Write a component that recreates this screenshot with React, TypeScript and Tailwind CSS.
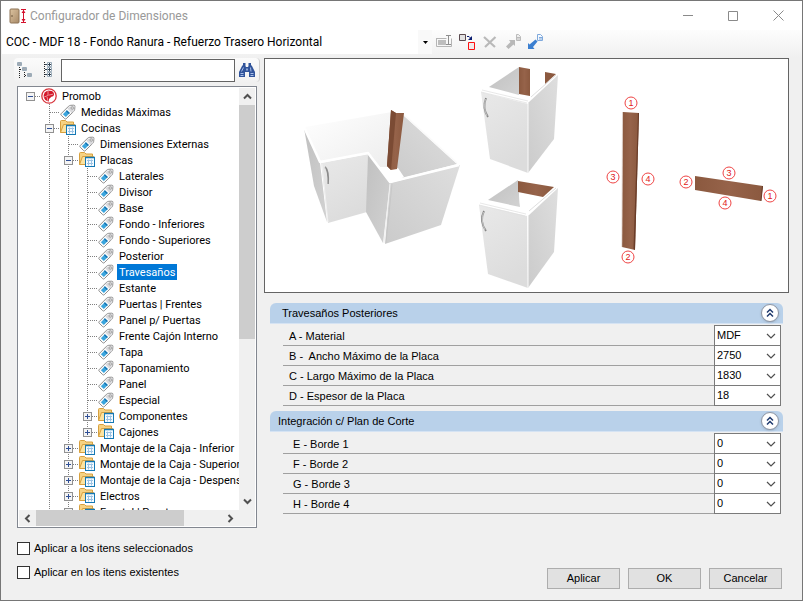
import type { ReactNode } from "react";
import { clsx } from "clsx";

type Guide = "none" | "line";

interface TreeNode {
  label: string;
  depth: number;
  kind: "root" | "tag" | "folder";
  open?: boolean;
  last?: boolean;
  selected?: boolean;
}

const nodes: TreeNode[] = [
  { label: "Promob", depth: 0, kind: "root", open: true },
  { label: "Medidas Máximas", depth: 1, kind: "tag" },
  { label: "Cocinas", depth: 1, kind: "folder", open: true },
  { label: "Dimensiones Externas", depth: 2, kind: "tag" },
  { label: "Placas", depth: 2, kind: "folder", open: true },
  { label: "Laterales", depth: 3, kind: "tag" },
  { label: "Divisor", depth: 3, kind: "tag" },
  { label: "Base", depth: 3, kind: "tag" },
  { label: "Fondo - Inferiores", depth: 3, kind: "tag" },
  { label: "Fondo - Superiores", depth: 3, kind: "tag" },
  { label: "Posterior", depth: 3, kind: "tag" },
  { label: "Travesaños", depth: 3, kind: "tag", selected: true },
  { label: "Estante", depth: 3, kind: "tag" },
  { label: "Puertas | Frentes", depth: 3, kind: "tag" },
  { label: "Panel p/ Puertas", depth: 3, kind: "tag" },
  { label: "Frente Cajón Interno", depth: 3, kind: "tag" },
  { label: "Tapa", depth: 3, kind: "tag" },
  { label: "Taponamiento", depth: 3, kind: "tag" },
  { label: "Panel", depth: 3, kind: "tag" },
  { label: "Especial", depth: 3, kind: "tag" },
  { label: "Componentes", depth: 3, kind: "folder" },
  { label: "Cajones", depth: 3, kind: "folder", last: true },
  { label: "Montaje de la Caja - Inferior", depth: 2, kind: "folder" },
  { label: "Montaje de la Caja - Superior", depth: 2, kind: "folder" },
  { label: "Montaje de la Caja - Despensa", depth: 2, kind: "folder" },
  { label: "Electros", depth: 2, kind: "folder" },
  { label: "Frontal | Puertas", depth: 2, kind: "folder" },
];

const sections = [
  {
    title: "Travesaños Posteriores",
    titleClass: "pl-3",
    labelClass: "pl-1.5",
    fields: [
      { id: "a", label: "A - Material", value: "MDF" },
      { id: "b", label: "B -  Ancho Máximo de la Placa", value: "2750" },
      { id: "c", label: "C - Largo Máximo de la Placa", value: "1830" },
      { id: "d", label: "D - Espesor de la Placa", value: "18" },
    ],
  },
  {
    title: "Integración c/ Plan de Corte",
    titleClass: "pl-2",
    labelClass: "pl-2.5",
    fields: [
      { id: "e", label: "E - Borde 1", value: "0" },
      { id: "f", label: "F - Borde 2", value: "0" },
      { id: "g", label: "G - Borde 3", value: "0" },
      { id: "h", label: "H - Borde 4", value: "0" },
    ],
  },
];

function AppIcon() {
  return (
    <svg width="18" height="16" viewBox="0 0 18 16">
      <defs>
        <linearGradient id="door" x1="0" y1="0" x2="1" y2="1">
          <stop offset="0" stopColor="#dcc3a0" />
          <stop offset="1" stopColor="#a88a68" />
        </linearGradient>
      </defs>
      <rect x="1" y="1" width="9" height="14" rx="1" fill="url(#door)" stroke="#8d7355" />
      <path d="M3 7v2" stroke="#6d563c" />
      <path d="M12 1.5h5M12 14.5h5M14.5 2v12" stroke="#d4112d" />
      <path d="M12.5 5l2-3 2 3zM12.5 11l2 3 2-3z" fill="#d4112d" />
    </svg>
  );
}

function RootIcon() {
  return (
    <svg width="16" height="16" viewBox="0 0 16 16">
      <circle cx="8" cy="8" r="7.2" fill="#fff" stroke="#d8343c" strokeWidth="1.3" />
      <path d="M8 2.6a5.4 5.4 0 1 0 0 10.8z" fill="#d3182a" />
      <path d="M8 2.8c3-.4 5.2 1.2 5 3.6-.2 1.6-1.4 2.1-2.6 2.3L8 11z" fill="#d3182a" />
      <path d="M7 3v4.5L3.2 9M7.5 7.2l4.5-1M6 9l1 4" stroke="#f3b5b8" strokeWidth="0.8" fill="none" />
    </svg>
  );
}

function TagIcon() {
  return (
    <svg width="16" height="16" viewBox="0 0 16 16">
      <path
        d="M1 9.8L8.6 2.2Q9.6 1.4 10.8 1.3L13.8 1.2Q15 1.2 14.9 2.4L14.7 5.4Q14.5 6.6 13.7 7.4L6.2 14.8Q5.4 15.4 4.7 14.7L1.2 11.2Q.5 10.5 1 9.8z"
        fill="#fbfbfb"
        stroke="#8e8e8e"
      />
      <path d="M9 3l4.5-1.2 1 .8-1 4.6-1.8 1.7-4.3-4.3z" fill="#d9d9dc" />
      <path d="M6.9 6.2l2.9 2.9-4 4-2.9-2.9z" fill="#3aa5dd" />
      <path d="M6.9 6.2l2.9 2.9-1 1-2.9-2.9z" fill="#1673b1" />
      <circle cx="12.2" cy="4" r="1.2" fill="#fff" stroke="#888" strokeWidth="0.8" />
    </svg>
  );
}

function FolderIcon() {
  return (
    <svg width="16" height="16" viewBox="0 0 16 16">
      <path d="M.5 12.5v-11q0-1 1-1h4l1.5 1.5h6.5v3" fill="#f6d283" stroke="#d7a03e" />
      <path d="M.5 12.5l3-8h11v8z" fill="#fce3a1" stroke="#d7a03e" />
      <rect x="6.5" y="5.5" width="9" height="9" fill="#f5fbff" stroke="#1478b4" />
      <path d="M6 5.5h10" stroke="#1478b4" strokeWidth="1.5" />
      <path d="M9.5 7.5v6M12.5 7.5v6M8 8.5h6M8 11.5h6" stroke="#9cc3e4" />
    </svg>
  );
}

function GuideCell({ kind }: { kind: Guide }) {
  return (
    <svg width="19" height="16" viewBox="0 0 19 16" className="shrink-0">
      {kind === "line" && <path d="M9.5 0v16" stroke="#808080" strokeDasharray="1 1" />}
    </svg>
  );
}

function Branch({ node }: { node: TreeNode }) {
  const lines = (
    <>
      {node.depth > 0 && <path d={node.last ? "M9.5 0v9" : "M9.5 0v16"} stroke="#808080" strokeDasharray="1 1" />}
      <path d="M10 8.5h10" stroke="#808080" strokeDasharray="1 1" />
    </>
  );
  if (node.kind === "tag") {
    return (
      <svg width="20" height="16" viewBox="0 0 20 16" className="shrink-0">
        {lines}
      </svg>
    );
  }
  return (
    <button type="button" aria-label={node.open ? "Contraer" : "Expandir"} className="shrink-0">
      <svg width="20" height="16" viewBox="0 0 20 16" className="block">
        {lines}
        <rect x="5.5" y="4.5" width="8" height="8" fill="#f4f4f4" stroke="#919191" />
        <path d="M7 8.5h5" stroke="#2f4f95" />
        {!node.open && <path d="M9.5 6v5" stroke="#2f4f95" />}
      </svg>
    </button>
  );
}

function TreeRow({ node }: { node: TreeNode }) {
  const guides: Guide[] = Array.from({ length: node.depth }, (_, i) => (i === 0 ? "none" : "line"));

  return (
    <li className="flex h-4 items-center whitespace-nowrap" role="treeitem" aria-selected={!!node.selected}>
      {guides.map((kind, i) => (
        <GuideCell key={i} kind={kind} />
      ))}
      <Branch node={node} />
      <span className="size-4 shrink-0">
        {node.kind === "root" && <RootIcon />}
        {node.kind === "tag" && <TagIcon />}
        {node.kind === "folder" && <FolderIcon />}
      </span>
      <span className={clsx("ml-[3px] h-4 px-0.5 leading-[18px]", node.selected && "bg-[#0078d7] text-white")}>
        {node.label}
      </span>
    </li>
  );
}

function Chevron({ d }: { d: string }) {
  return (
    <svg width="9" height="9" viewBox="0 0 9 9" fill="none" stroke="#505050" strokeWidth="2">
      <path d={d} />
    </svg>
  );
}

function Tree() {
  return (
    <div className="mx-[3px] grid min-h-0 flex-1 grid-cols-[1fr_16px] grid-rows-[1fr_16px] border border-[#828790] bg-white p-px">
      <ul role="tree" className="min-h-0 min-w-0 overflow-hidden pl-0.5 font-['Roboto',sans-serif]">
        {nodes.map((node) => (
          <TreeRow key={node.label} node={node} />
        ))}
      </ul>
      <div className="flex min-h-0 flex-col items-center bg-[#f0f0f0]">
        <button type="button" aria-label="Arriba" className="flex h-[17px] items-center">
          <Chevron d="M1 6.5L4.5 3L8 6.5" />
        </button>
        <div className="w-full flex-[234] bg-[#cdcdcd]" />
        <div className="flex-[154]" />
        <button type="button" aria-label="Abajo" className="flex h-[17px] items-center">
          <Chevron d="M1 2.5L4.5 6L8 2.5" />
        </button>
      </div>
      <div className="col-span-2 flex items-center bg-[#f0f0f0] pr-4">
        <button type="button" aria-label="Izquierda" className="flex w-[17px] justify-center">
          <Chevron d="M6.5 1L3 4.5L6.5 8" />
        </button>
        <div className="h-full flex-[147] bg-[#cdcdcd]" />
        <div className="flex-[38]" />
        <button type="button" aria-label="Derecha" className="flex w-[17px] justify-center">
          <Chevron d="M2.5 1L6 4.5L2.5 8" />
        </button>
      </div>
    </div>
  );
}

function TreeToolbar() {
  return (
    <div className="flex h-6 items-center rounded-sm border-r border-[#d0d0d0] bg-linear-to-b from-[#fbfbfb] to-[#f1f1f1]">
      <button type="button" aria-label="Contraer todo" className="ml-[3px]">
        <svg width="16" height="16" viewBox="0 0 16 16" fill="none">
          <path d="M2.5 5v11M7.5 10v6M3 7.5h2M8 13.5h3" stroke="#222" strokeDasharray="1 1" />
          <path d="M.5.5h4v3h-4zM5.5 5.5h4v3h-4zM10.5 11.5h4v3h-4z" fill="#fff" stroke="#9aabb8" />
          <path d="M1 2h3M6 7h3M11 13h3" stroke="#456" />
        </svg>
      </button>
      <button type="button" aria-label="Expandir todo" className="ml-2.5">
        <svg width="10" height="16" viewBox="0 0 10 16" fill="none">
          <path d="M1.5 0v16" stroke="#222" strokeDasharray="1 1" />
          <path d="M4.5.5h4v4h-4zM4.5 5.5h4v4h-4zM4.5 10.5h4v4h-4z" fill="#fff" stroke="#9aabb8" />
          <path d="M5 2.5h3M5 7.5h3M5 12.5h3M6.5 1v3M6.5 6v3M6.5 11v3M2 2.5h2M2 7.5h2M2 12.5h2" stroke="#345" />
        </svg>
      </button>
      <input
        type="text"
        aria-label="Buscar"
        className="ml-2 h-[23px] min-w-0 flex-1 border border-[#646464] bg-white px-1 outline-none"
      />
      <button type="button" aria-label="Localizar" className="mx-1">
        <svg width="16" height="14" viewBox="0 0 16 14">
          <path d="M4 0h2.5v3l.5 1h2l.5-1V0H12v2l1 1 3 6v5h-6V9H6v5H0V9l3-6 1-1z" fill="#31549b" />
          <path
            d="M4.5 4.5l-2 4M11.5 4.5l.5 4M1.5 10.5h3M11.5 10.5h3M1.5 12.5h3M11.5 12.5h3"
            stroke="#a9bfe8"
          />
          <path d="M7 5.5h2v2H7z" fill="#8fa9d8" />
        </svg>
      </button>
    </div>
  );
}

const marks = [
  { n: 1, x: 367, y: 45 },
  { n: 3, x: 349, y: 119 },
  { n: 4, x: 384, y: 121 },
  { n: 2, x: 364, y: 199 },
  { n: 2, x: 422, y: 124 },
  { n: 3, x: 465, y: 115 },
  { n: 1, x: 506, y: 138 },
  { n: 4, x: 461, y: 145 },
];

function Preview() {
  return (
    <div className="border border-[#646464] bg-white">
      <svg viewBox="1 1 523 233" className="block h-[233px] w-full" role="img" aria-label="Travesaños">
        <defs>
          <linearGradient id="wall" x1="0" y1="0" x2="1" y2="1">
            <stop offset="0" stopColor="#ffffff" />
            <stop offset="1" stopColor="#ededed" />
          </linearGradient>
          <linearGradient id="front" x1="0" y1="0" x2="0.4" y2="1">
            <stop offset="0" stopColor="#e9e9e9" />
            <stop offset="1" stopColor="#dcdcdc" />
          </linearGradient>
          <linearGradient id="side" x1="0" y1="1" x2="1" y2="0">
            <stop offset="0" stopColor="#cbcbcb" />
            <stop offset="1" stopColor="#dedede" />
          </linearGradient>
          <linearGradient id="shade" x1="0" y1="0" x2="1" y2="1">
            <stop offset="0" stopColor="#c0c0c0" />
            <stop offset="1" stopColor="#d2d2d2" />
          </linearGradient>
          <linearGradient id="wood" x1="0" y1="0" x2="1" y2="0">
            <stop offset="0" stopColor="#8b593f" />
            <stop offset="0.5" stopColor="#96634a" />
            <stop offset="1" stopColor="#8b593f" />
          </linearGradient>
        </defs>

        {/* corner cabinet */}
        <g strokeLinejoin="round">
          <path d="M41 69L128 54L124 109L116 109L104 95L56 104z" fill="url(#wall)" />
          <path d="M139 57L193 106L139 120L131 110z" fill="url(#side)" />
          <path d="M117 109L134 110L140 119L127 123z" fill="#fff" />
          <path d="M40 70L56 105L63 164L50 128z" fill="url(#shade)" />
          <path d="M57 105L104 96L103 154L64 165z" fill="url(#front)" />
          <path d="M104 95L126 125L119 185L102 154z" fill="url(#shade)" />
          <path d="M126 125L196 107L177 167L121 186z" fill="url(#side)" />
          <path d="M40 69L56 104L104 95L126 124L195 107" fill="none" stroke="#fff" strokeWidth="2.5" />
          <path d="M58 106L64 164M126 126L120 185" stroke="#f0f0f0" />
          <path d="M128 126L122 185" stroke="#bdbdbd" strokeWidth="0.5" />
          <path d="M139 56L193 105" stroke="#fafafa" strokeWidth="1.5" />
          <path d="M127 52L132 55L140 55L133 111L127 112L123 108z" fill="url(#wood)" />
          <path d="M127 52L132 55L127 112L123 108z" fill="#7b4b34" />
          <path d="M61 109Q65 113 64 126" fill="none" stroke="#8c8c8c" strokeWidth="1.8" />
          <path d="M60.5 109Q63 115 63 126" fill="none" stroke="#e5e5e5" strokeWidth="0.8" />
        </g>

        {/* vertical rails */}
        <g strokeLinejoin="round">
          <path d="M255 9L225 29L255 37z" fill="url(#shade)" />
          <path d="M255 9L266 11L266 38L255 36z" fill="url(#wood)" />
          <path d="M281 14L292 16L281 26z" fill="#8b593f" />
          <path d="M294 17L264 45L264 115L290 81z" fill="url(#side)" />
          <path d="M217 34L264 46L264 115L226 101z" fill="url(#front)" />
          <path d="M292 17L267 39" stroke="#d5d5d5" strokeWidth="0.8" />
          <path d="M218 32L264 43M217 34L263 45" stroke="#dedede" strokeWidth="0.7" />
          <path d="M264 45V115" stroke="#fbfbfb" />
          <path d="M222 40Q218 50 224 59" fill="none" stroke="#858585" strokeWidth="1.8" />
          <path d="M221.5 41Q219 50 223 58" fill="none" stroke="#ddd" strokeWidth="0.7" />
        </g>

        {/* horizontal rail */}
        <g strokeLinejoin="round">
          <path d="M254 122L224 142L256 149z" fill="url(#shade)" />
          <path d="M255 135L279 139L267 151L256 149z" fill="#fff" />
          <path d="M254 123L290 129L279 139L254 134z" fill="url(#wood)" />
          <path d="M294 130L264 158L264 230L290 194z" fill="url(#side)" />
          <path d="M215 147L263 158L264 230L224 216z" fill="url(#front)" />
          <path d="M292 130L265 153" stroke="#d5d5d5" strokeWidth="0.8" />
          <path d="M216 145L262 156M215 147L261 158" stroke="#dedede" strokeWidth="0.7" />
          <path d="M264 158V230" stroke="#fbfbfb" />
          <path d="M220 153Q215 163 222 173" fill="none" stroke="#858585" strokeWidth="1.8" />
          <path d="M219.5 154Q216.5 163 221 172" fill="none" stroke="#ddd" strokeWidth="0.7" />
        </g>

        <path d="M359 54L375 55L371 192L358 189z" fill="url(#wood)" />
        <path d="M374 55L375 55L371 192L369.5 191z" fill="#693c28" />
        <path d="M358.5 54L358 189" stroke="#c9b4a8" strokeWidth="0.6" />
        <path d="M431 118L499 128L497 143L431 132z" fill="url(#wood)" />
        <path d="M498 128L499 128L497.5 143L496.5 143z" fill="#693c28" />

        {marks.map((mark, i) => (
          <g key={i}>
            <circle cx={mark.x} cy={mark.y} r="6" fill="#fff" stroke="#ef4444" strokeWidth="1" />
            <text x={mark.x} y={mark.y + 3} textAnchor="middle" fill="#e02020" fontSize="9">
              {mark.n}
            </text>
          </g>
        ))}
      </svg>
    </div>
  );
}

interface FieldProps {
  id: string;
  label: string;
  value: string;
  labelClass: string;
}

function Field({ id, label, value, labelClass }: FieldProps) {
  return (
    <div className="flex h-5">
      <label
        htmlFor={id}
        className={clsx("flex-1 whitespace-pre border-b border-[#a0a0a0] leading-5", labelClass)}
      >
        {label}
      </label>
      <div className="-mt-px grid w-[67px] grid-cols-[1fr_16px] items-center border border-[#7a7a7a] bg-white">
        <select
          id={id}
          defaultValue={value}
          className="col-span-2 col-start-1 row-start-1 h-full appearance-none bg-transparent pb-px pl-0.5 outline-none"
        >
          <option>{value}</option>
        </select>
        <svg
          width="10"
          height="10"
          viewBox="0 0 10 10"
          className="pointer-events-none col-start-2 row-start-1 ml-0.5"
          fill="none"
        >
          <path d="M1 3l4 4 4-4" stroke="#505050" strokeWidth="1.2" />
        </svg>
      </div>
    </div>
  );
}

function Section({ title, titleClass, labelClass, fields }: (typeof sections)[number]) {
  return (
    <section className="px-1.5">
      <div className="flex h-[21px] items-center justify-between rounded-t-md border-b border-[#d5e3f3] bg-[#b9d1ea] pr-1">
        <h2 className={titleClass}>{title}</h2>
        <button
          type="button"
          aria-label="Contraer sección"
          className="flex size-[18px] items-center justify-center rounded-full border border-[#8d95a3] bg-white shadow"
        >
          <svg width="8" height="10" viewBox="0 0 8 10" fill="none" stroke="#1f3a6e" strokeWidth="1.5">
            <path d="M1 4.5l3-3 3 3M1 8.5l3-3 3 3" />
          </svg>
        </button>
      </div>
      <div className="ml-[13px] mr-0.5 pt-0.5">
        {fields.map((field) => (
          <Field key={field.id} labelClass={labelClass} {...field} />
        ))}
      </div>
    </section>
  );
}

function TitleBar() {
  return (
    <header className="flex h-[29px] items-center bg-white pr-px">
      <span className="ml-2">
        <AppIcon />
      </span>
      <h1 className="ml-[3px] flex-1 font-['Roboto',sans-serif] text-xs text-[#999]">Configurador de Dimensiones</h1>
      <div className="flex items-center">
        <button type="button" aria-label="Minimizar" className="flex w-[45px] justify-center">
          <svg width="10" height="10" viewBox="0 0 10 10" stroke="#8a8a8a">
            <path d="M0 4.5h10" />
          </svg>
        </button>
        <button type="button" aria-label="Maximizar" className="flex w-[45px] justify-center">
          <svg width="10" height="10" viewBox="0 0 10 10" stroke="#8a8a8a" fill="none">
            <path d="M.5.5h9v9h-9z" />
          </svg>
        </button>
        <button type="button" aria-label="Cerrar" className="flex w-[46px] justify-center">
          <svg width="11" height="11" viewBox="0 0 11 11" stroke="#8a8a8a">
            <path d="M.5.5l10 10M10.5.5l-10 10" />
          </svg>
        </button>
      </div>
    </header>
  );
}

function TopToolbar() {
  return (
    <div className="flex h-7 items-start bg-linear-to-b from-[#fdfdfd] to-[#f0f0f0]">
      <div className="ml-px grid h-6 w-[430px] grid-cols-[1fr_14px] items-center bg-white">
        <select
          aria-label="Configuración"
          className="col-span-2 col-start-1 row-start-1 h-6 appearance-none pl-1 font-['Roboto',sans-serif] text-xs outline-none"
        >
          <option>COC - MDF 18 - Fondo Ranura - Refuerzo Trasero Horizontal</option>
        </select>
        <span className="pointer-events-none col-start-2 row-start-1 flex h-6 items-center justify-center bg-[#f9f9f9]">
          <svg width="5" height="3" viewBox="0 0 5 3">
            <path d="M0 0h5L2.5 3z" />
          </svg>
        </span>
      </div>
      <div className="ml-1 flex h-6 items-center gap-[7px]">
        <button type="button" aria-label="Renombrar">
          <svg width="16" height="16" viewBox="0 0 16 16" fill="none">
            <path d="M.5 4.5h10M.5 4v8.5h15V4.5" stroke="#b5b5b5" />
            <path d="M2 6h8v5H2z" fill="#bdbdbd" />
            <path d="M10 1.5h5M10 10.5h5M12.5 2v8" stroke="#8f8f8f" />
          </svg>
        </button>
        <button type="button" aria-label="Copiar">
          <svg width="16" height="16" viewBox="0 0 16 16" fill="none">
            <path d="M.5.5h6v6h-6z" fill="#e2e2e2" stroke="#5b4a4f" />
            <path d="M9.5 8.5h6v7h-6z" fill="#f0eaea" stroke="#fd1010" />
            <path d="M8 2.5h2l2 2" stroke="#0a1d70" />
            <path d="M13 2v4H9z" fill="#0a1d70" />
          </svg>
        </button>
        <button type="button" aria-label="Eliminar">
          <svg width="16" height="16" viewBox="0 0 16 16" fill="none">
            <path d="M2 3l11 10M13.5 3L3 13" stroke="#b9b9b9" strokeWidth="2.2" />
          </svg>
        </button>
        <button type="button" aria-label="Exportar">
          <svg width="16" height="16" viewBox="0 0 16 16">
            <path d="M1 12.5L5.5 8 4 6h6v6l-1.500-1.500-5 4.500z" fill="#b8b8b8" />
            <path d="M11.5.5h2l2 2v4h-4z" fill="#eee" stroke="#bbb" />
            <path d="M12 3.5h3M12 5h3" stroke="#bbb" />
          </svg>
        </button>
        <button type="button" aria-label="Importar">
          <svg width="16" height="16" viewBox="0 0 16 16">
            <path d="M0 15V9l1.5 1.5 6-5 2 2L5 13l1.5 2z" fill="#3b7fd0" />
            <path d="M9.5.5h3l2 2v4h-5z" fill="#f4f9ff" stroke="#7fa9dc" />
            <path d="M11 3.5h3M11 5h3" stroke="#7fa9dc" />
          </svg>
        </button>
      </div>
    </div>
  );
}

function Check({ label }: { label: string }) {
  return (
    <label className="flex h-6 items-center gap-1">
      <input type="checkbox" className="size-[13px] appearance-none border border-[#333] bg-white checked:bg-[#0078d7]" />
      {label}
    </label>
  );
}

function DialogButton({ children }: { children: ReactNode }) {
  return (
    <button type="button" className="h-[21px] w-[73px] border border-[#adadad] bg-[#e1e1e1] text-center">
      {children}
    </button>
  );
}

export default function App() {
  return (
    <div className="flex h-screen flex-col border border-[#767676] bg-[#f0f0f0] font-['Liberation_Sans',Arial,sans-serif] text-[11px] text-black">
      <TitleBar />
      <TopToolbar />
      <main className="flex min-h-0 flex-1 gap-1 px-[13px]">
        <aside className="flex w-[246px] shrink-0 flex-col">
          <TreeToolbar />
          <div className="mt-1 flex min-h-0 flex-1">
            <Tree />
          </div>
          <div className="ml-[3px] pb-4 pt-2">
            <Check label="Aplicar a los itens seleccionados" />
            <Check label="Aplicar en los itens existentes" />
          </div>
        </aside>
        <div className="flex min-w-0 flex-1 flex-col">
          <Preview />
          <div className="flex flex-col gap-[5px] pt-2.5">
            {sections.map((section) => (
              <Section key={section.title} {...section} />
            ))}
          </div>
          <footer className="mt-auto flex justify-end gap-2 pb-[11px] pr-[7px]">
            <DialogButton>Aplicar</DialogButton>
            <DialogButton>OK</DialogButton>
            <DialogButton>Cancelar</DialogButton>
          </footer>
        </div>
      </main>
    </div>
  );
}
